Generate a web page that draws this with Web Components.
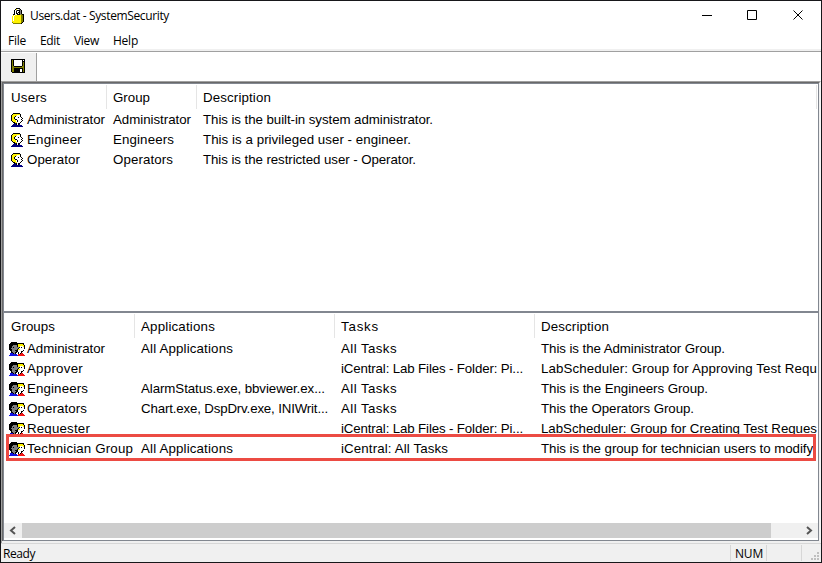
<!DOCTYPE html>
<html lang="en"><head><meta charset="utf-8"><title>SystemSecurity</title>
<style>html,body{margin:0;width:822px;height:563px;overflow:hidden;background:#fff}</style></head>
<body><security-window></security-window>
<script>
const define=(name,html,setup)=>customElements.define(name,class extends HTMLElement{
 connectedCallback(){if(this.shadowRoot)return;const r=this.attachShadow({mode:'open'});r.innerHTML=html;if(setup)setup.call(this,r)}
});
const ICONS={
user:["..kkkkkkk...",".kyyyyyyyk..","kyyyyywwwk..","kyyykwwwwk..","kyykwwwkwwk.","kyykwwwwwwwk","kyyykkwwwwk.","kyyyywkwwwwk",".kyyywkwwwk.","..kkyywwwk..","...kbkwkk...","..bbbkwkb...",".bbbbbbbbbb.","bbbbbbbbbbbb"],
group:["..kkkkkk........",".kkkkkkkkkkkkkk.","kkkkkkkkkyyyyyk.","kkkkggggkyyyyyyk","kkkgggggkyywwwyk","kkkgkgggggkwkwwk","kkgggggggkwwwwwk","kkkgggggkyywwwww",".kkgggkkkwwwwwk.","..kggggkkwwwkk..","..kkggkkwkwwk...",".bbbkgkwwkwkrr..",".bbbbbbbwrrrrrr.","bbbbbbbbbrrrrrrr"],
lock:["....kkkk....","...kywwgk...","..kwgkkkgk..","..kwk.wkgk..","..kwk.kkgk..","..kwkk.kgk..",".kkwwkkkgokk",".ywyyyyyyook","ywyyyyyyyook","ywyyyyyyyook","ywyyyyyyyook","ywyyyyyyyook","ywyyyyyyyook","yyyyyyyyyook","oyyyyyyyyok.",".ooooooook.."],
disk:["kkkkkkkkkkkkkk","kokwwwwwwwwkwk","kokwwwwwwwwkkk","kokwwwwwwwwkok","kokwwwwwwwwkok","kokwwwwwwwwkok","kokwwwwwwwwkok","kookkkkkkkkook","kooooooooooook","kookkkkkkkkkok","kookkkkkkwwkok","kookkkkkkwwkok","kookkkkkkwwkok",".kkkkkkkkkkkkk"]};
const PAL={k:'#000',y:'#fff200',w:'#fff',b:'#000080',r:'#ef1515',g:'#808080',o:'#808000'};
define('pixel-icon','<style>:host{display:block;flex:none}svg{display:block}</style>',function(r){
 const n=this.getAttribute('name'),a=ICONS[n],w=a[0].length;let s='';
 a.forEach((row,y)=>[...row].forEach((c,x)=>{if(c!=='.')s+=`<rect x="${x}" y="${y}" width="1" height="1" fill="${n==='group'&&c==='b'?'#1010e0':PAL[c]}"/>`}));
 r.innerHTML+=`<svg width="${w}" height="${a.length}" shape-rendering="crispEdges">${s}</svg>`;
});
/* Label whose tracking is adjusted to a given text width. */
define('fit-text','<style>:host{display:block;flex:none;white-space:pre}span{display:inline-block}</style><span><slot></slot></span>',function(r){
 const w=+this.getAttribute('w');if(!w)return;const s=r.querySelector('span');
 s.style.letterSpacing=(w-s.getBoundingClientRect().width)/this.textContent.length+'px';
});
define('window-title',`<style>:host{display:flex;height:30px;align-items:center;padding-left:11px;font-size:12px;background:#fff}
pixel-icon{margin-top:-1px}fit-text{margin:-1px 0 0 6px}.b{display:flex;margin:-2px 0 0 auto;padding-right:15px}svg{display:block}</style>
<pixel-icon name="lock"></pixel-icon><fit-text w="139">Users.dat - SystemSecurity</fit-text>
<div class="b"><svg width="104" height="12" fill="none" stroke="#000"><path d="M0 6.5h10M45.5 1.5h9v9h-9zM91.5 1.5l9 9M100.5 1.5l-9 9"/></svg></div>`);
define('menu-bar',`<style>:host{display:flex;height:18px;align-items:center;padding-left:7px;font-size:12px;border-bottom:2px solid #f0f0f0}
fit-text{margin-right:14px}</style><fit-text w="18">File</fit-text><fit-text w="20">Edit</fit-text><fit-text w="25">View</fit-text><fit-text w="25">Help</fit-text>`);
define('tool-bar',`<style>:host{display:flex;height:29px;border-top:1px solid #a0a0a0}.t{box-sizing:border-box;width:36px;margin-top:1px;background:#f0f0f0;border-right:1px solid #a0a0a0;padding:6px 0 0 10px}</style><div class="t"><pixel-icon name="disk"></pixel-icon></div>`);
define('list-cell',`<style>:host{display:flex;box-sizing:border-box;align-items:center;height:20px;overflow:hidden;padding-left:6px;min-width:0}
:host([first]){padding-left:7px}:host([icon=user]){gap:4px}:host([icon=group]){padding-left:5px;gap:2px}:host([head]){height:24px;border-right:1px solid #e5e5e5}:host([open]){border-right:0}pixel-icon{margin-top:1px}</style><slot></slot>`,function(r){
 const i=this.getAttribute('icon');if(i)r.querySelector('slot').insertAdjacentHTML('beforebegin',`<pixel-icon name="${i}"></pixel-icon>`);
});
define('list-view',`<style>:host{display:block;box-sizing:border-box;overflow:hidden;background:#fff;border:1px solid #828790;font:13.3px "Liberation Sans",Arial,sans-serif;color:#000}
.g{display:grid;padding-top:1px;grid-template-columns:var(--cols)}</style><div class="g"></div>`,function(r){
 const rows=DATA[this.getAttribute('data')],g=r.querySelector('.g');
 g.innerHTML=rows.map((row,y)=>row.map(([t,w],x)=>`<list-cell ${y?'':'head'} ${x===3?'open':''} ${x?'':'first'} ${y&&!x?`icon="${this.getAttribute('data')}"`:''}>${t?`<fit-text w="${w}">${t}</fit-text>`:''}</list-cell>`).join('')).join('');
});
const DATA={user:[
[['Users',36],['Group',37],['Description',68]],
[['Administrator',78],['Administrator',78],['This is the built-in system administrator.',230]],
[['Engineer',55],['Engineers',61],['This is a privileged user - engineer.',208]],
[['Operator',53],['Operators',60],['This is the restricted user - Operator.',213]]],
group:[
[['Groups',44],['Applications',74],['Tasks',38],['Description',68]],
[['Administrator',78],['All Applications',92],['All Tasks',56],['This is the Administrator Group.',184]],
[['Approver',56],[''],['iCentral: Lab Files - Folder: Pi...',182],['LabScheduler: Group for Approving Test Requ',276]],
[['Engineers',61],['AlarmStatus.exe, bbviewer.ex...',184],['All Tasks',56],['This is the Engineers Group.',167]],
[['Operators',60],['Chart.exe, DspDrv.exe, INIWrit...',187],['All Tasks',56],['This the Operators Group.',153]],
[['Requester',63],[''],['iCentral: Lab Files - Folder: Pi...',182],['LabScheduler: Group for Creating Test Reques',276]],
[['Technician Group',106],['All Applications',92],['iCentral: All Tasks',107],['This is the group for technician users to modify',272]]]};
define('scroll-bar',`<style>:host{display:flex;height:15px;background:#f0f0f0}svg{display:block;flex:none}.t{width:749px;background:#cdcdcd}.r{margin-left:auto}path{fill:none;stroke:#555;stroke-width:2}</style>
<svg width="18" height="15"><path d="M11 4L7 7.5l4 3.5"/></svg><div class="t"></div><svg class="r" width="18" height="15"><path d="M7 4l4 3.5L7 11"/></svg>`);
define('status-bar',`<style>:host{display:flex;box-sizing:border-box;height:19px;background:#f0f0f0;border-top:1px solid #d7d7d7;font-size:12px}
.p{box-sizing:border-box;border-right:1px solid #d7d7d7;margin-top:1px;height:16px;display:flex;align-items:center}.a{width:730px;padding-left:2px}.n{width:36px;padding-left:4px}.e{width:35px}.s{margin:8px 0 0 9px}</style>
<div class="p a"><fit-text w="32">Ready</fit-text></div><div class="p n"><fit-text w="28">NUM</fit-text></div><div class="p e"></div>
<svg class="s" width="9" height="8" fill="#bfbfbf"><path d="M6 0h2v2h-2zM3 3h2v2h-2zM6 3h2v2h-2zM0 6h2v2h-2zM3 6h2v2h-2zM6 6h2v2h-2z"/></svg>`);
define('security-window',`<style>:host{display:flex;flex-direction:column;position:relative;box-sizing:border-box;width:822px;height:563px;background:#fff;border:1px solid #17171a;font:12px "Open Sans","Noto Sans",sans-serif;color:#000;line-height:normal}
.c{display:flex;flex-direction:column;box-sizing:border-box;height:462px;width:820px;border-top:1px solid #a0a0a0;border-left:1px solid #a0a0a0;border-right:1px solid #f8f8f8;background:#f0f0f0}
.i{border-top:1px solid #696969;border-left:1px solid #696969;border-right:1px solid #f0f0f0;height:458px;box-sizing:content-box}
.u{height:229px;--cols:103px 90px 620px}.l{height:229px;--cols:131px 200px 200px 282px}
.s{position:absolute;left:3px;right:3px;top:522px}.h{position:absolute;box-sizing:border-box;left:5px;top:433px;width:810px;height:27px;border:3px solid #ec4b43}</style>
<window-title></window-title><menu-bar></menu-bar><tool-bar></tool-bar>
<div class="c"><div class="i"><list-view class="u" data="user"></list-view><list-view class="l" data="group"></list-view></div></div>
<status-bar></status-bar><scroll-bar class="s"></scroll-bar><div class="h"></div>`);
</script></body></html>
